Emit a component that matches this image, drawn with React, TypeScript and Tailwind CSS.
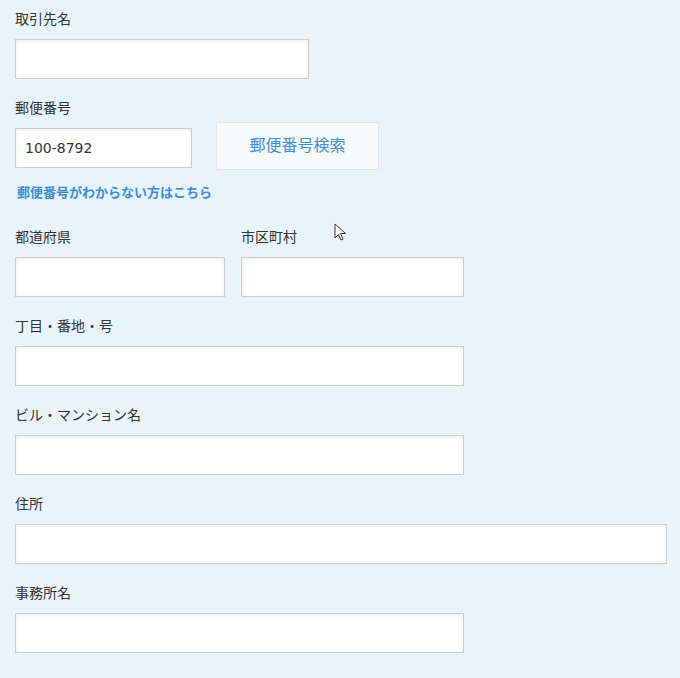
import type { ReactNode } from "react";

const inputClass =
    "block h-10 border border-[#cccccc] bg-white px-[9px] text-[14px] text-[#333] shadow-[inset_0_1px_4px_rgba(0,0,0,0.08)] outline-none";

function Label({ children }: { children: ReactNode }) {
    return <div className="h-5 mb-[10px] text-[14px] leading-5 text-[#333]">{children}</div>;
}

function Field({ label, width, last }: { label: string; width: string; last?: boolean }) {
    return (
        <div className={last ? "" : "mb-[19px]"}>
            <Label>{label}</Label>
            <input className={`${inputClass} ${width}`} />
        </div>
    );
}

export default function App() {
    return (
        <div
            className="relative h-[678px] w-[680px] bg-[#e8f3fa] pl-[15px] pt-[9px]"
            style={{ fontFamily: '"DejaVu Sans", "Noto Sans CJK JP", sans-serif' }}
        >
            <Field label="取引先名" width="w-[294px]" />

            {/* 郵便番号 */}
            <div className="h-5 mb-[4px] text-[14px] leading-5 text-[#333]">郵便番号</div>
            <div className="flex items-start gap-6">
                <input className={`${inputClass} mt-[6px] w-[177px] font-normal`} defaultValue="100-8792" />
                <button className="h-12 w-[163px] border border-[#dfe5ea] bg-[#f7f9fb] text-[16px] text-[#3d8fd6]">
                    郵便番号検索
                </button>
            </div>
            <a className="mt-[15px] mb-[26px] ml-[2px] block text-[13px] font-bold leading-4 text-[#3a8fd6]">
                郵便番号がわからない方はこちら
            </a>

            <div className="mb-[19px] flex gap-4">
                <div>
                    <Label>都道府県</Label>
                    <input className={`${inputClass} w-[210px]`} />
                </div>
                <div>
                    <Label>市区町村</Label>
                    <input className={`${inputClass} w-[223px]`} />
                </div>
            </div>

            <Field label="丁目・番地・号" width="w-[449px]" />
            <Field label="ビル・マンション名" width="w-[449px]" />
            <Field label="住所" width="w-[652px]" />
            <Field label="事務所名" width="w-[449px]" last />

            {/* mouse pointer */}
            <svg className="absolute left-[334px] top-[223px]" width="13" height="19" viewBox="0 0 13 19">
                <path
                    d="M1 1 L1 15 L4.5 11.5 L7 17 L9 16 L6.5 10.5 L11.5 10.5 Z"
                    fill="#ffffff"
                    stroke="#3a2a3e"
                    strokeWidth="1"
                    strokeLinejoin="round"
                />
            </svg>
        </div>
    );
}
